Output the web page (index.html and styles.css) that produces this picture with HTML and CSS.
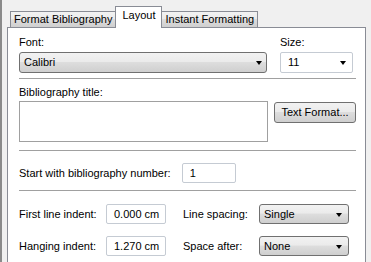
FILE: index.html
```html
<!DOCTYPE html>
<html lang="en">
<head>
<meta charset="UTF-8">
<title>Bibliography Layout</title>
<link rel="stylesheet" href="styles.css">
</head>
<body>
  <div class="frame">
    <div class="tabs">
      <div class="tab">Format Bibliography</div>
      <div class="tab active">Layout</div>
      <div class="tab">Instant Formatting</div>
    </div>

    <div class="panel">
      <div class="font-row">
        <div class="field">
          <div class="label">Font:</div>
          <div class="combo font-combo">Calibri<span class="arrow"></span></div>
        </div>
        <div class="field">
          <div class="label">Size:</div>
          <div class="combo edit size-combo">11<span class="arrow"></span></div>
        </div>
      </div>

      <div class="sep first-sep"></div>

      <div class="label title-label">Bibliography title:</div>
      <div class="title-row">
        <div class="title-box"></div>
        <div class="button">Text Format...</div>
      </div>

      <div class="sep"></div>

      <div class="number-row">
        <span class="label">Start with bibliography number:</span>
        <div class="textbox number-box">1</div>
      </div>

      <div class="sep last-sep"></div>

      <div class="indent-grid">
        <span class="label">First line indent:</span>
        <div class="textbox indent-box">0.000 cm</div>
        <span class="label gap-label">Line spacing:</span>
        <div class="combo spacing-combo">Single<span class="arrow"></span></div>

        <span class="label">Hanging indent:</span>
        <div class="textbox indent-box">1.270 cm</div>
        <span class="label gap-label">Space after:</span>
        <div class="combo spacing-combo">None<span class="arrow"></span></div>
      </div>
    </div>
  </div>
</body>
</html>
```

FILE: styles.css
```css
html, body {
  margin: 0;
  height: 100%;
}
body {
  background-color: #f0f0f0;
  font-family: "Liberation Sans", Arial, sans-serif;
  font-size: 11px;
  color: #000;
  overflow: hidden;
}
.frame {
  border-left: 2px solid #8a8a8a;
  padding-left: 5px;
  width: 359px;
  height: 100%;
}
.tabs {
  display: flex;
  align-items: flex-end;
  height: 27px;
  padding-left: 3px;
}
.tab {
  height: 15px;
  line-height: 15px;
  padding: 0 3px;
  border: 1px solid #898c95;
  border-bottom: none;
  background: linear-gradient(#f2f2f2, #ebebeb 45%, #dddddd 50%, #cfcfcf);
  white-space: nowrap;
}
.tab.active {
  position: relative;
  z-index: 1;
  height: 21px;
  line-height: 17px;
  margin: 0 -1px -1px -1px;
  padding: 0 6px;
  background: #fff;
}
.panel {
  background-color: #fff;
  border: 1px solid #898c95;
  border-bottom: none;
  height: calc(100% - 27px);
  padding: 8px 8px 0 11px;
  box-sizing: border-box;
}
.label {
  line-height: 13px;
  white-space: nowrap;
}
.font-row {
  display: flex;
  gap: 13px;
}
.font-row .label {
  margin-bottom: 3px;
}
.combo {
  position: relative;
  box-sizing: border-box;
  height: 21px;
  line-height: 19px;
  padding-left: 4px;
  border: 1px solid #707070;
  border-radius: 3px;
  background: linear-gradient(#f2f2f2, #ebebeb 45%, #dddddd 50%, #cfcfcf);
}
.combo.edit {
  border-color: #c5cbd3;
  border-radius: 2px;
  background: #fff;
  padding-left: 7px;
}
.arrow {
  position: absolute;
  right: 4px;
  top: 8px;
  width: 0;
  height: 0;
  border-left: 3.5px solid transparent;
  border-right: 3.5px solid transparent;
  border-top: 4px solid #000;
}
.font-combo {
  width: 248px;
}
.size-combo {
  width: 73px;
}
.size-combo .arrow {
  right: 6px;
}
.sep {
  height: 1px;
  background-color: #a0a0a0;
  width: 337px;
  margin: 8px 0 12px 0;
}
.first-sep {
  margin-top: 5px;
  margin-bottom: 7px;
}
.last-sep {
  margin-top: 7px;
  margin-bottom: 13px;
}
.title-label {
  margin-bottom: 2px;
}
.title-row {
  display: flex;
  align-items: flex-start;
  gap: 6px;
}
.title-box {
  width: 249px;
  height: 41px;
  box-sizing: border-box;
  border: 1px solid #a0a0a0;
}
.button {
  margin-top: 1px;
  box-sizing: border-box;
  width: 82px;
  height: 21px;
  line-height: 19px;
  text-align: center;
  border: 1px solid #707070;
  border-radius: 3px;
  background: linear-gradient(#f2f2f2, #ebebeb 45%, #dddddd 50%, #cfcfcf);
}
.textbox {
  box-sizing: border-box;
  height: 20px;
  line-height: 18px;
  padding-left: 7px;
  border: 1px solid #c5cbd3;
  border-radius: 2px;
  background: #fff;
}
.number-row {
  display: flex;
  align-items: center;
  gap: 11px;
}
.number-box {
  width: 54px;
}
.indent-grid {
  display: grid;
  grid-template-columns: 87px 60px 93px 90px;
  row-gap: 12px;
  align-items: center;
}
.gap-label {
  padding-left: 17px;
}
.spacing-combo {
  height: 20px;
  line-height: 18px;
}
.spacing-combo .arrow {
  top: 8px;
  right: 6px;
}
```
